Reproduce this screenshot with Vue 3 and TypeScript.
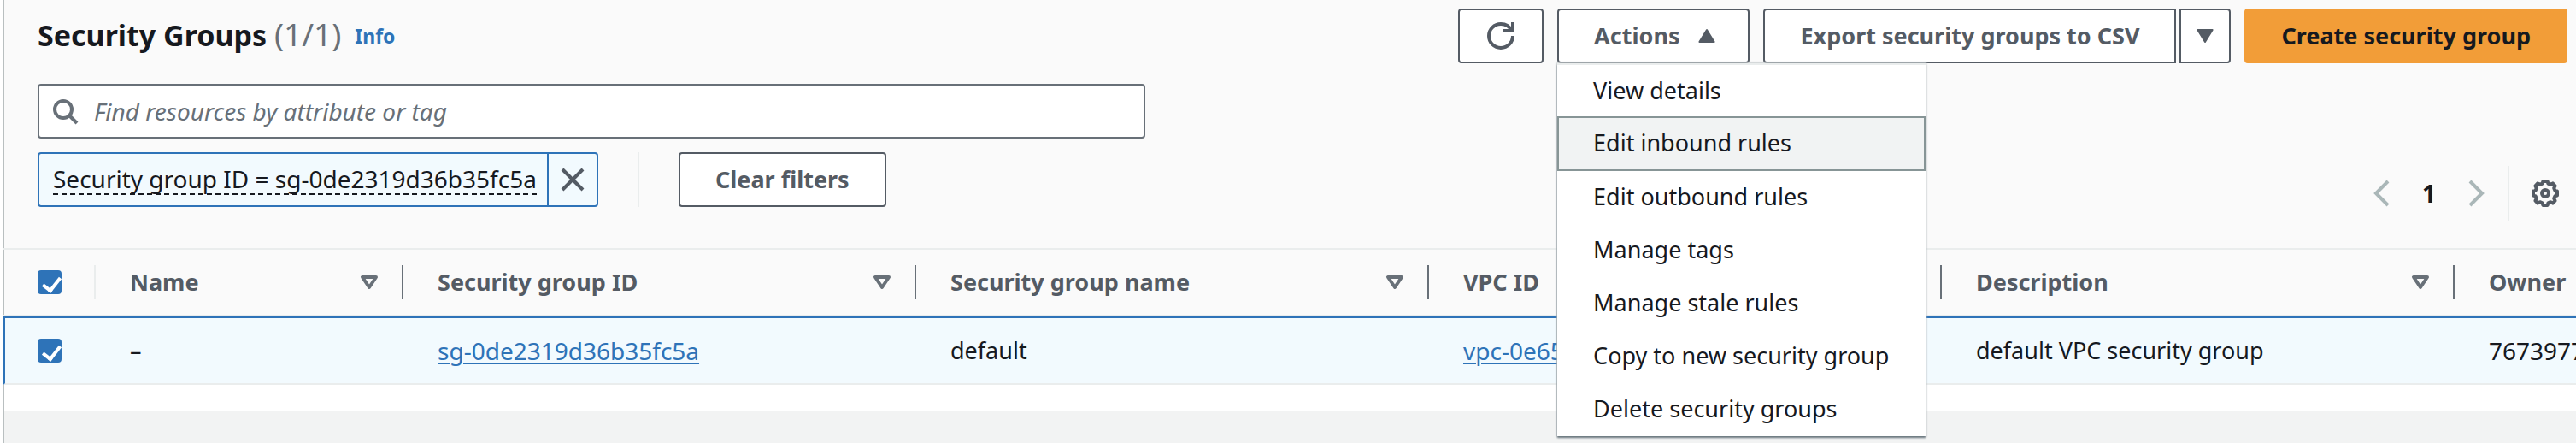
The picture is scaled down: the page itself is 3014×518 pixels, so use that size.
<script setup lang="ts">
import { ref } from 'vue'

const query = ref('')
const allSelected = ref(true)
const rowSelected = ref(true)

const menuItems: string[] = [
  'View details',
  'Edit inbound rules',
  'Edit outbound rules',
  'Manage tags',
  'Manage stale rules',
  'Copy to new security group',
  'Delete security groups',
]
const activeItem = 'Edit inbound rules'

const columns: string[] = ['Name', 'Security group ID', 'Security group name', 'VPC ID', 'Description', 'Owner']
</script>

<template>
  <main class="panel">
    <section class="top">
      <header class="heading">
        <h1>Security Groups <span class="count">(1/1)</span></h1>
        <a class="info" href="#info">Info</a>
        <div class="actions">
          <button class="btn icon-btn" type="button" aria-label="Refresh">
            <svg width="32" height="32" viewBox="0 0 16 16" fill="none" stroke="currentColor" stroke-width="2">
              <path d="M15 8c0 3.900-3.100 7-7 7s-7-3.100-7-7 3.100-7 7-7c2.800 0 5.200 1.600 6.300 4" />
              <path d="M9 5h6V0" />
            </svg>
          </button>
          <div class="dropdown">
            <button class="btn with-caret" type="button" aria-haspopup="menu" aria-expanded="true">
              Actions
              <svg width="32" height="32" viewBox="0 0 16 16">
                <path d="M3.700 11.500h8.600L8 4.500z" fill="currentColor" stroke="currentColor" stroke-linejoin="round" />
              </svg>
            </button>
            <ul class="menu" role="menu">
              <li v-for="item in menuItems" :key="item" role="none">
                <button type="button" role="menuitem" class="item" :class="{ active: item === activeItem }">{{ item }}</button>
              </li>
            </ul>
          </div>
          <div class="split">
            <button class="btn main" type="button">Export security groups to CSV</button>
            <button class="btn more" type="button" aria-label="More export options">
              <svg width="32" height="32" viewBox="0 0 16 16">
                <path d="M3.700 4.500h8.600L8 11.500z" fill="currentColor" stroke="currentColor" stroke-linejoin="round" />
              </svg>
            </button>
          </div>
          <button class="btn primary" type="button">Create security group</button>
        </div>
      </header>

      <label class="search">
        <svg width="32" height="32" viewBox="0 0 16 16" fill="none" stroke="currentColor" stroke-width="2">
          <circle cx="7" cy="7" r="5" />
          <path d="M15 15l-4.500-4.500" />
        </svg>
        <input v-model="query" type="text" placeholder="Find resources by attribute or tag" aria-label="Find resources" />
      </label>

      <div class="filters">
        <div class="token">
          <button class="token-label" type="button"><span>Security group ID = sg-0de2319d36b35fc5a</span></button>
          <button class="token-close" type="button" aria-label="Remove filter">
            <svg width="32" height="32" viewBox="0 0 16 16" fill="none" stroke="currentColor" stroke-width="2">
              <path d="M2 2l12 12M14 2L2 14" />
            </svg>
          </button>
        </div>
        <span class="rule"></span>
        <button class="btn" type="button">Clear filters</button>
        <nav class="pages" aria-label="Pagination">
          <button class="plain" type="button" aria-label="Previous page" disabled>
            <svg width="32" height="32" viewBox="0 0 16 16" fill="none" stroke="currentColor" stroke-width="2">
              <path d="M12 1L5 8l7 7" />
            </svg>
          </button>
          <button class="plain page" type="button">1</button>
          <button class="plain" type="button" aria-label="Next page" disabled>
            <svg width="32" height="32" viewBox="0 0 16 16" fill="none" stroke="currentColor" stroke-width="2">
              <path d="M4 1l7 7-7 7" />
            </svg>
          </button>
          <span class="rule"></span>
          <button class="plain gear" type="button" aria-label="Preferences">
            <svg width="32" height="32" viewBox="0 0 16 16" fill="none" stroke="currentColor" stroke-width="2" stroke-linejoin="round">
              <path d="M6.700 1h2.600l.4 1.300 1.400.6 1.300-.7 1.400 1.500-.7 1.300.6 1.400 1.300.3v2.600l-1.300.3-.6 1.400.7 1.300-1.400 1.500-1.300-.7-1.400.6-.4 1.300H6.700l-.4-1.300-1.400-.6-1.300.7-1.400-1.500.7-1.300-.6-1.400L1 9.300V6.700l1.300-.3.6-1.400-.7-1.300 1.400-1.500 1.300.7 1.400-.6z" />
              <circle cx="8" cy="8" r="2" />
            </svg>
          </button>
        </nav>
      </div>
    </section>

    <div class="table-wrap">
      <table>
        <colgroup>
          <col class="c-check" />
          <col class="c-name" />
          <col class="c-wide" span="4" />
          <col />
        </colgroup>
        <thead>
          <tr>
            <th class="check"><input v-model="allSelected" type="checkbox" aria-label="Select all" /></th>
            <th v-for="(col, i) in columns" :key="col" scope="col">
              <div class="th">
                <span>{{ col }}</span>
                <svg v-if="i < 5" width="32" height="32" viewBox="0 0 16 16" fill="none" stroke="currentColor" stroke-width="2" stroke-linejoin="round">
                  <path d="M4 5h8l-4 6z" />
                </svg>
              </div>
            </th>
          </tr>
        </thead>
        <tbody>
          <tr>
            <td class="check"><input v-model="rowSelected" type="checkbox" aria-label="Select default" /></td>
            <td>–</td>
            <td class="id"><a href="#sg">sg-0de2319d36b35fc5a</a></td>
            <td>default</td>
            <td class="id"><a href="#vpc">vpc-0e65</a></td>
            <td>default VPC security group</td>
            <td class="id">7673977</td>
          </tr>
        </tbody>
      </table>
    </div>
  </main>
</template>

<style>
body {
  background: #f2f3f3;
}
</style>

<style scoped>
.panel {
  box-sizing: border-box;
  min-height: 100vh;
  border-left: 4px solid #fff;
  font: 28px/40px "Noto Sans", "Open Sans", sans-serif;
  color: #16191f;
}
.panel,
.top,
.table-wrap,
th.check {
  box-shadow: inset 1px 0 #b9bfc0;
}
.panel * {
  box-sizing: border-box;
}
svg {
  display: block;
  flex: none;
}
button,
input {
  font: inherit;
  color: inherit;
  margin: 0;
}
.top {
  background: #fafafa;
  padding: 10px 10px 32px 40px;
}
.heading {
  display: flex;
  margin-bottom: 24px;
}
h1 {
  margin: 0;
  font-size: 34px;
  line-height: 60px;
  font-weight: 700;
}
.count {
  font-size: 37px;
  font-weight: 400;
  color: #687078;
}
.info {
  margin-left: 16px;
  font-size: 23px;
  line-height: 64px;
  font-weight: 700;
  color: #2e73b8;
  text-decoration: none;
}
.actions {
  display: flex;
  gap: 16px;
  margin-left: auto;
}
.btn {
  display: flex;
  align-items: center;
  justify-content: center;
  height: 64px;
  padding: 0 41px;
  border: 2px solid #545b64;
  border-radius: 4px;
  background: #fff;
  color: #545b64;
  font-size: 27px;
  font-weight: 700;
  white-space: nowrap;
}
.icon-btn {
  padding: 0 32px;
}
.with-caret {
  gap: 16px;
  padding-right: 32px;
}
.dropdown {
  position: relative;
}
.menu {
  position: absolute;
  z-index: 2;
  top: 64px;
  left: 0;
  width: 431px;
  margin: 0;
  padding: 0;
  list-style: none;
  font-size: 27px;
  background: #fff;
  border-top: 2px solid #eaeded;
  box-shadow: 0 2px 2px #6b777f, 0 0 2px 1px #c3c9cb;
}
.item {
  display: block;
  width: 100%;
  height: 62px;
  padding: 0 40px 2px;
  border: 2px solid transparent;
  background: none;
  text-align: left;
  white-space: nowrap;
}
.item.active {
  height: 64px;
  margin: -2px 0 0;
  background: #f1f3f3;
  border-color: #879596;
}
.split {
  display: flex;
  gap: 4px;
}
.split .main {
  border-radius: 4px 0 0 4px;
}
.split .more {
  border-radius: 0 4px 4px 0;
  padding: 0 12px;
}
.primary {
  background: #f29d38;
  border-color: #f29d38;
  color: #16191f;
}
.search {
  display: flex;
  align-items: center;
  gap: 18px;
  width: 1296px;
  max-width: 100%;
  height: 64px;
  padding: 0 14px;
  border: 2px solid #687078;
  border-radius: 4px;
  background: #fff;
  color: #687078;
}
.search input {
  flex: 1;
  padding: 0;
  border: 0;
  outline: 0;
  background: none;
}
.search input::placeholder {
  color: #687078;
  font-style: italic;
  opacity: 1;
}
.filters {
  display: flex;
  margin-top: 16px;
}
.token {
  display: flex;
  height: 64px;
  border: 2px solid #2e73b8;
  border-radius: 4px;
  background: #f2fafe;
}
.token button {
  border: 0;
  background: none;
  padding: 0 12px 0 16px;
}
.token .token-close {
  padding: 0 12px;
  border-left: 2px solid #2e73b8;
  color: #545b64;
}
.token-label span {
  display: block;
  line-height: 34px;
  border-bottom: 2px dashed #16191f;
}
.rule {
  width: 2px;
  height: 64px;
  background: #eaeded;
}
.filters > .rule {
  margin: 0 46px;
}
.pages {
  display: flex;
  align-items: center;
  height: 64px;
  margin: 16px 0 0 auto;
}
.plain {
  border: 0;
  padding: 0;
  background: none;
  color: #545b64;
}
.plain:disabled {
  color: #aab7b8;
}
.page {
  width: 80px;
  font-weight: 700;
  color: #16191f;
}
.pages .rule {
  margin: 0 26px 0 20px;
}
.gear {
  margin-right: 10px;
}
.table-wrap {
  overflow: hidden;
  background: #fff;
  padding-bottom: 30px;
}
table {
  width: 100%;
  table-layout: fixed;
  border-collapse: separate;
  border-spacing: 0;
}
.c-check {
  width: 108px;
}
.c-name {
  width: 360px;
}
.c-wide {
  width: 600px;
}
th,
td {
  padding: 0 40px;
  text-align: left;
  white-space: nowrap;
  font-size: 27px;
}
th {
  height: 80px;
  padding-right: 24px;
  background: #fafafa;
  border-top: 2px solid #eaeded;
  border-bottom: 2px solid #eaeded;
  position: relative;
  color: #545b64;
}
th:not(:last-child)::after {
  content: "";
  position: absolute;
  right: 0;
  top: 18px;
  bottom: 18px;
  width: 2px;
  background: #687078;
}
th.check::after {
  background: #eaeded;
}
.th {
  display: flex;
  align-items: center;
  justify-content: space-between;
}
.th svg {
  color: #687078;
}
td {
  height: 80px;
  background: #f2fafe;
  border-top: 2px solid #2e73b8;
  border-bottom: 2px solid #eaeded;
}
td.id {
  font-size: 28px;
}
td.check {
  border-left: 2px solid #2e73b8;
  padding-left: 38px;
}
td a {
  color: #2e73b8;
  text-decoration: underline;
  text-underline-offset: 3px;
  text-decoration-thickness: 2px;
}
.check input {
  appearance: none;
  display: block;
  width: 28px;
  height: 28px;
  border-radius: 4px;
  background: #2e73b8;
  position: relative;
}
.check input:checked::after {
  content: "";
  position: absolute;
  left: 10px;
  top: 4px;
  width: 9px;
  height: 17px;
  border: solid #fff;
  border-width: 0 4px 4px 0;
  transform: rotate(38deg);
}
</style>
